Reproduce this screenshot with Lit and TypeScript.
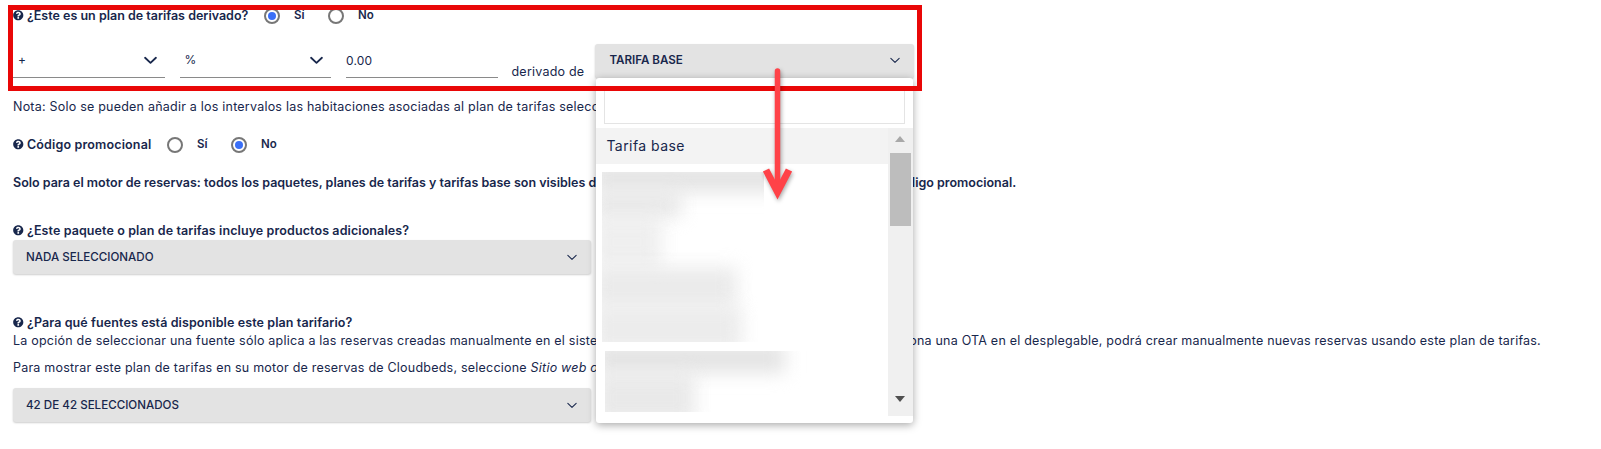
import { LitElement, html, css, svg } from "lit";
import { customElement } from "lit/decorators.js";

const helpIcon = html`<svg class="help" viewBox="0 0 512 512"><path fill="currentColor" d="M504 256c0 136.997-111.043 248-248 248S8 392.997 8 256C8 119.083 119.043 8 256 8s248 111.083 248 248zM262.655 90c-54.497 0-89.255 22.957-116.549 63.758-3.536 5.286-2.353 12.415 2.715 16.258l34.699 26.31c5.205 3.947 12.621 3.008 16.665-2.122 17.864-22.658 30.113-35.797 57.303-35.797 20.429 0 45.698 13.148 45.698 32.958 0 14.976-12.363 22.667-32.534 33.976C247.128 238.528 216 254.941 216 296v4c0 6.627 5.373 12 12 12h56c6.627 0 12-5.373 12-12v-1.333c0-28.462 83.186-29.647 83.186-106.667 0-58.002-60.165-102-116.531-102zM256 338c-25.365 0-46 20.635-46 46 0 25.364 20.635 46 46 46s46-20.636 46-46c0-25.365-20.635-46-46-46z"/></svg>`;

const chevron = (cls: string) =>
  html`<svg class=${cls} viewBox="0 0 12 8">${svg`<path d="M1 1.5 6 6.2 11 1.5" fill="none" stroke="currentColor" stroke-linecap="round" stroke-linejoin="round"/>`}</svg>`;

const radio = (label: string, checked: boolean) => html`
  <span class="radio-item">
    <span class="radio ${checked ? "on" : ""}"></span>
    <span class="radio-label">${label}</span>
  </span>
`;

const greySelect = (text: string) => html`
  <div class="grey-select">
    <span>${text}</span>
    ${chevron("chev-thin")}
  </div>
`;

@customElement("app-root")
export class AppRoot extends LitElement {
  static styles = css`
    :host {
      display: block;
      width: 1601px;
      height: 449px;
      overflow: hidden;
      background: #fff;
      font-family: Inter, "Liberation Sans", sans-serif;
      font-size: 12.5px;
      letter-spacing: 0.22px;
      line-height: 17px;
      color: #18274c;
    }
    .page {
      position: relative;
      height: 449px;
      padding: 7px 0 0 13px;
      box-sizing: border-box;
      white-space: nowrap;
    }
    .label {
      font-weight: 600;
      height: 17px;
      display: flex;
      align-items: center;
      gap: 3.5px;
      letter-spacing: 0.1px;
    }
    .help {
      width: 10.5px;
      height: 10.5px;
      flex: none;
    }
    .radio-row {
      display: flex;
      align-items: center;
      height: 17px;
    }
    .radio-row .label {
      width: 251px;
      letter-spacing: 0;
    }
    .radio-row.promo .label {
      width: 154px;
      letter-spacing: 0.15px;
    }
    .radio-item {
      display: flex;
      align-items: center;
      gap: 14px;
      width: 64px;
    }
    .radio-label {
      font-weight: 600;
      font-size: 11.5px;
      letter-spacing: 0;
    }
    .radio {
      width: 16px;
      height: 16px;
      box-sizing: border-box;
      border: 2px solid #777;
      border-radius: 50%;
      background: #fff;
      flex: none;
    }
    .radio.on {
      padding: 2px;
      background: #3a6ff7 content-box;
    }
    .derive {
      display: flex;
      align-items: flex-end;
      gap: 15px;
      margin-top: 20px;
      height: 34px;
    }
    .line-field {
      width: 151.5px;
      height: 33px;
      box-sizing: border-box;
      border-bottom: 1px solid #8a8a8a;
      display: flex;
      justify-content: space-between;
      align-items: center;
      padding: 0 3px 3px 5px;
      font-size: 12px;
      letter-spacing: 0;
    }
    .line-field.value {
      padding-left: 0;
      align-items: flex-start;
      padding-top: 7px;
      letter-spacing: 0.2px;
    }
    .chev-bold {
      width: 13px;
      height: 9px;
      stroke-width: 1.7;
      margin-right: 5px;
      margin-top: 2px;
    }
    .chev-thin {
      width: 10px;
      height: 7px;
      stroke-width: 1.3;
    }
    .derive-label {
      margin: 0 -4px -1px -1px;
      line-height: 14px;
    }
    .base-wrap {
      position: relative;
      width: 319px;
    }
    .grey-select {
      height: 34px;
      box-sizing: border-box;
      display: flex;
      align-items: center;
      justify-content: space-between;
      padding: 0 14px 0 13px;
      background: #e3e3e3;
      border-radius: 3px;
      box-shadow: 0 1px 2px rgba(0, 0, 0, 0.2);
      font-size: 11.6px;
      font-weight: 500;
      letter-spacing: 0;
      width: 578px;
    }
    .base-wrap .grey-select {
      width: 319px;
      padding: 0 14px 1px 14px;
      font-weight: 600;
    }
    .menu {
      position: absolute;
      top: 34px;
      left: 1px;
      width: 317px;
      height: 345px;
      background: #fff;
      border-radius: 3px;
      box-shadow: 0 2px 8px rgba(0, 0, 0, 0.35);
      overflow: hidden;
      z-index: 2;
    }
    .search {
      height: 38px;
      margin: 8px 8px 0;
      border: 1px solid #e4e4e4;
      box-sizing: border-box;
    }
    .menu-body {
      display: flex;
      height: 288px;
      margin-top: 4px;
    }
    .menu-list {
      flex: 1;
      min-width: 0;
    }
    .menu-item {
      height: 36px;
      line-height: 36px;
      padding-left: 10px;
      background: #f3f3f3;
      font-size: 14px;
      letter-spacing: 0.45px;
    }
    .blur-box {
      overflow: hidden;
      position: relative;
      background: #fff;
    }
    .blur-box i {
      display: block;
      background: #e4e4e4;
      filter: blur(9px);
      position: absolute;
    }
    .blur-a {
      width: 162px;
      height: 170px;
      margin: 8px 0 0 6px;
    }
    .blur-b {
      width: 205px;
      height: 61px;
      margin: 9px 0 0 9px;
    }
    .scroll {
      width: 25px;
      background: #f0f0f0;
      position: relative;
    }
    .scroll-up,
    .scroll-down {
      position: absolute;
      left: 7px;
      width: 0;
      height: 0;
      border-left: 5.5px solid transparent;
      border-right: 5.5px solid transparent;
    }
    .scroll-up {
      top: 8px;
      border-bottom: 6px solid #a8a8a8;
    }
    .scroll-down {
      bottom: 14px;
      border-top: 6px solid #505050;
    }
    .thumb {
      position: absolute;
      top: 25px;
      left: 2px;
      width: 21px;
      height: 73px;
      background: #bdbdbd;
    }
    .note {
      margin-top: 20px;
      height: 17px;
    }
    .promo {
      margin-top: 21px;
    }
    .bold-note {
      margin-top: 21px;
      height: 17px;
      font-weight: 600;
      font-size: 12.5px;
      letter-spacing: 0;
    }
    .extras {
      margin-top: 31px;
    }
    .field-gap {
      margin-top: 1px;
    }
    .sources {
      margin-top: 40px;
    }
    .source-help {
      margin-top: 1px;
      height: 17px;
    }
    .source-web {
      margin-top: 10px;
      height: 17px;
    }
    .source-select {
      margin-top: 12px;
    }
    .highlight {
      position: absolute;
      left: 8px;
      top: 5px;
      width: 914px;
      height: 86px;
      box-sizing: border-box;
      border: 5px solid #e90707;
      z-index: 3;
      pointer-events: none;
    }
    .arrow {
      position: absolute;
      left: 757px;
      top: 64px;
      width: 40px;
      height: 140px;
      z-index: 4;
      filter: drop-shadow(1px 2px 2px rgba(0, 0, 0, 0.35));
    }
  `;

  render() {
    return html`
      <div class="page">
        <div class="radio-row">
          <div class="label">${helpIcon}<span>¿Este es un plan de tarifas derivado?</span></div>
          ${radio("Sí", true)} ${radio("No", false)}
        </div>

        <div class="derive">
          <div class="line-field"><span>+</span>${chevron("chev-bold")}</div>
          <div class="line-field"><span>%</span>${chevron("chev-bold")}</div>
          <div class="line-field value"><span>0.00</span></div>
          <div class="derive-label">derivado de</div>
          <div class="base-wrap">
            ${greySelect("TARIFA BASE")}
            <div class="menu">
              <div class="search"></div>
              <div class="menu-body">
                <div class="menu-list">
                  <div class="menu-item">Tarifa base</div>
                  <div class="blur-box blur-a">
                    <i style="left:-10px;top:-8px;width:190px;height:28px"></i>
                    <i style="left:-10px;top:20px;width:90px;height:25px;opacity:.85"></i>
                    <i style="left:-10px;top:45px;width:70px;height:50px;opacity:.6"></i>
                    <i style="left:-10px;top:95px;width:145px;height:40px;opacity:.75"></i>
                    <i style="left:-10px;top:135px;width:150px;height:45px;opacity:.7"></i>
                  </div>
                  <div class="blur-box blur-b">
                    <i style="left:-10px;top:-8px;width:190px;height:30px"></i>
                    <i style="left:-10px;top:22px;width:100px;height:50px;opacity:.8"></i>
                  </div>
                </div>
                <div class="scroll">
                  <span class="scroll-up"></span>
                  <span class="thumb"></span>
                  <span class="scroll-down"></span>
                </div>
              </div>
            </div>
          </div>
        </div>

        <div class="note">Nota: Solo se pueden añadir a los intervalos las habitaciones asociadas al plan de tarifas seleccionado.</div>

        <div class="radio-row promo">
          <div class="label">${helpIcon}<span>Código promocional</span></div>
          ${radio("Sí", false)} ${radio("No", true)}
        </div>

        <div class="bold-note">Solo para el motor de reservas: todos los paquetes, planes de tarifas y tarifas base son visibles de forma predeterminada, a menos que tengan un código promocional.</div>

        <div class="label extras">${helpIcon}<span>¿Este paquete o plan de tarifas incluye productos adicionales?</span></div>
        <div class="field-gap">${greySelect("NADA SELECCIONADO")}</div>

        <div class="label sources">${helpIcon}<span>¿Para qué fuentes está disponible este plan tarifario?</span></div>
        <div class="source-help">La opción de seleccionar una fuente sólo aplica a las reservas creadas manualmente en el sistema, y no a las reservas de otros canales. Si selecciona una OTA en el desplegable, podrá crear manualmente nuevas reservas usando este plan de tarifas.</div>
        <div class="source-web">Para mostrar este plan de tarifas en su motor de reservas de Cloudbeds, seleccione <em>Sitio web o motor de reservas</em>.</div>
        <div class="source-select">${greySelect("42 DE 42 SELECCIONADOS")}</div>

        <div class="highlight"></div>
        <svg class="arrow" viewBox="0 0 40 140">
          <path d="M20.5 7V128" fill="none" stroke="#ff4248" stroke-width="5.5" stroke-linecap="round"/>
          <path d="M9 106 20.5 128 32 106" fill="none" stroke="#ff4248" stroke-width="7" stroke-linejoin="miter"/>
        </svg>
      </div>
    `;
  }
}
